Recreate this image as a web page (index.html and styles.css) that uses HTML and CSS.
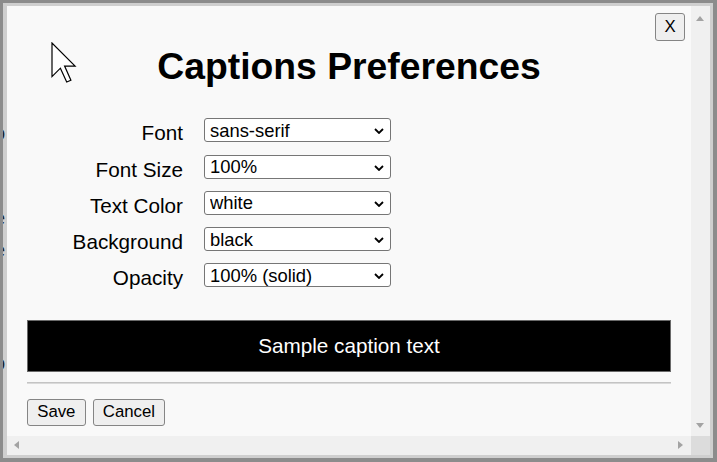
FILE: index.html
```html
<!DOCTYPE html>
<html lang="en">
<head>
<meta charset="utf-8">
<title>Captions Preferences</title>
<link rel="stylesheet" href="styles.css">
</head>
<body>
<div class="screen">
  <div class="dialog">
    <div class="content">
      <button class="close" type="button">X</button>
      <h1 class="title">Captions Preferences</h1>
      <div class="form">
        <label class="label" for="f-font">Font</label>
        <div class="select-wrap">
          <select id="f-font" class="select"><option>sans-serif</option></select>
          <svg class="chev" width="10" height="6" viewBox="0 0 10 6"><path d="M1 1 L5 5 L9 1" /></svg>
        </div>
        <label class="label" for="f-size">Font Size</label>
        <div class="select-wrap">
          <select id="f-size" class="select"><option>100%</option></select>
          <svg class="chev" width="10" height="6" viewBox="0 0 10 6"><path d="M1 1 L5 5 L9 1" /></svg>
        </div>
        <label class="label" for="f-color">Text Color</label>
        <div class="select-wrap">
          <select id="f-color" class="select"><option>white</option></select>
          <svg class="chev" width="10" height="6" viewBox="0 0 10 6"><path d="M1 1 L5 5 L9 1" /></svg>
        </div>
        <label class="label" for="f-bg">Background</label>
        <div class="select-wrap">
          <select id="f-bg" class="select"><option>black</option></select>
          <svg class="chev" width="10" height="6" viewBox="0 0 10 6"><path d="M1 1 L5 5 L9 1" /></svg>
        </div>
        <label class="label" for="f-op">Opacity</label>
        <div class="select-wrap">
          <select id="f-op" class="select"><option>100% (solid)</option></select>
          <svg class="chev" width="10" height="6" viewBox="0 0 10 6"><path d="M1 1 L5 5 L9 1" /></svg>
        </div>
      </div>
      <div class="preview">Sample caption text</div>
      <div class="rule"></div>
      <div class="actions">
        <button class="btn" type="button">Save</button>
        <button class="btn" type="button">Cancel</button>
      </div>
    </div>
    <div class="vbar">
      <span class="tri tri-up"></span>
      <span class="tri tri-down"></span>
    </div>
    <div class="hbar">
      <span class="tri tri-left"></span>
      <span class="tri tri-right"></span>
    </div>
    <div class="corner"></div>
  </div>
  <div class="peek">
    <span class="frag f1">o</span>
    <span class="frag f2">e</span>
    <span class="frag f3">e</span>
    <span class="frag f4 link">i</span>
    <span class="frag f5">o</span>
  </div>
  <svg class="cursor" width="30" height="42" viewBox="0 0 30 42">
    <path d="M1 1 L1 34.6 L9.4 26.2 L15.7 40 L19.9 38.2 L13.6 24.1 L24.1 24.1 Z" />
  </svg>
</div>
</body>
</html>
```

FILE: styles.css
```css
* { box-sizing: border-box; }

html, body {
  margin: 0;
  padding: 0;
  background: #8c8c8c;
}

body {
  font-family: "Liberation Sans", Arial, sans-serif;
  color: #000;
}

.screen {
  position: relative;
  width: 717px;
  height: 462px;
  border: 3px solid #8c8c8c;
  border-right-width: 4px;
  border-bottom-width: 4px;
  overflow: hidden;
}

.dialog {
  height: 100%;
  border: 3px solid #cfcfcf;
  border-left-width: 4px;
  background: #f9f9f9;
  display: grid;
  grid-template-columns: 1fr 19px;
  grid-template-rows: 1fr 19px;
}

.content {
  position: relative;
  overflow: hidden;
  padding: 20px;
  display: flex;
  flex-direction: column;
  align-items: stretch;
}

.close {
  position: absolute;
  top: 7px;
  right: 6px;
  width: 30px;
  height: 28px;
  padding: 0;
  border: 1px solid #858585;
  border-radius: 3px;
  background: #efefef;
  font-family: "Liberation Sans", Arial, sans-serif;
  font-size: 16.8px;
  color: #000;
}

.title {
  margin: 18.5px 0 0;
  font-size: 37.3px;
  line-height: 42px;
  font-weight: bold;
  text-align: center;
}

.form {
  margin-top: 31.8px;
  display: grid;
  grid-template-columns: 156px 187px;
  grid-auto-rows: 24px;
  column-gap: 21px;
  row-gap: 12.25px;
}

.label {
  text-align: right;
  font-size: 20.7px;
  line-height: 24px;
  padding-top: 3px;
  white-space: nowrap;
}

.select-wrap {
  position: relative;
  height: 24px;
}

.select {
  appearance: none;
  -webkit-appearance: none;
  width: 100%;
  height: 24px;
  margin: 0;
  padding: 0 20px 0 5px;
  border: 1px solid #767676;
  border-radius: 3px;
  background: #fff;
  font-family: "Liberation Sans", Arial, sans-serif;
  font-size: 18.4px;
  color: #000;
}

.chev {
  position: absolute;
  right: 7px;
  top: 10px;
  pointer-events: none;
}

.chev path {
  fill: none;
  stroke: #000;
  stroke-width: 1.8;
}

.preview {
  margin-top: 32.7px;
  height: 52px;
  background: #000;
  border: 1px solid #6a6a6a;
  color: #fff;
  font-size: 20.7px;
  line-height: 50px;
  text-align: center;
}

.rule {
  margin-top: 10px;
  height: 2px;
  border-top: 1px solid #c4c4c4;
  border-bottom: 1px solid #dadada;
}

.actions {
  margin-top: 15px;
  display: flex;
  gap: 7px;
}

.btn {
  height: 27px;
  padding: 0 9.2px;
  border: 1px solid #858585;
  border-radius: 3px;
  background: #efefef;
  font-family: "Liberation Sans", Arial, sans-serif;
  font-size: 16.8px;
  color: #000;
}

.vbar, .hbar {
  position: relative;
  background: #f0f0f0;
}

.corner {
  background: #dcdcdc;
}

.tri {
  position: absolute;
  width: 0;
  height: 0;
  border-style: solid;
}

.tri-up {
  top: 10px;
  left: 5px;
  border-width: 0 4.5px 5px 4.5px;
  border-color: transparent transparent #a3a3a3 transparent;
}

.tri-down {
  bottom: 8px;
  left: 5px;
  border-width: 5px 4.5px 0 4.5px;
  border-color: #a3a3a3 transparent transparent transparent;
}

.tri-left {
  left: 7px;
  top: 5px;
  border-width: 4.5px 5px 4.5px 0;
  border-color: transparent #a3a3a3 transparent transparent;
}

.tri-right {
  right: 8px;
  top: 5px;
  border-width: 4.5px 0 4.5px 5px;
  border-color: transparent transparent transparent #a3a3a3;
}

.peek {
  position: absolute;
  top: -3px;
  left: -3px;
  width: 8px;
  height: 462px;
  overflow: hidden;
  pointer-events: none;
}

.frag {
  position: absolute;
  left: -6px;
  font-size: 20px;
  line-height: 20px;
  color: #222;
}

.frag.link { color: #1a6fc0; left: -3px; }

.f1 { top: 123px; }
.f2 { top: 208px; }
.f3 { top: 240px; }
.f4 { top: 323px; }
.f5 { top: 353px; }

.cursor {
  position: absolute;
  top: 39px;
  left: 48px;
}

.cursor path {
  fill: #fff;
  stroke: #000;
  stroke-width: 1.2;
  stroke-linejoin: miter;
}
```
